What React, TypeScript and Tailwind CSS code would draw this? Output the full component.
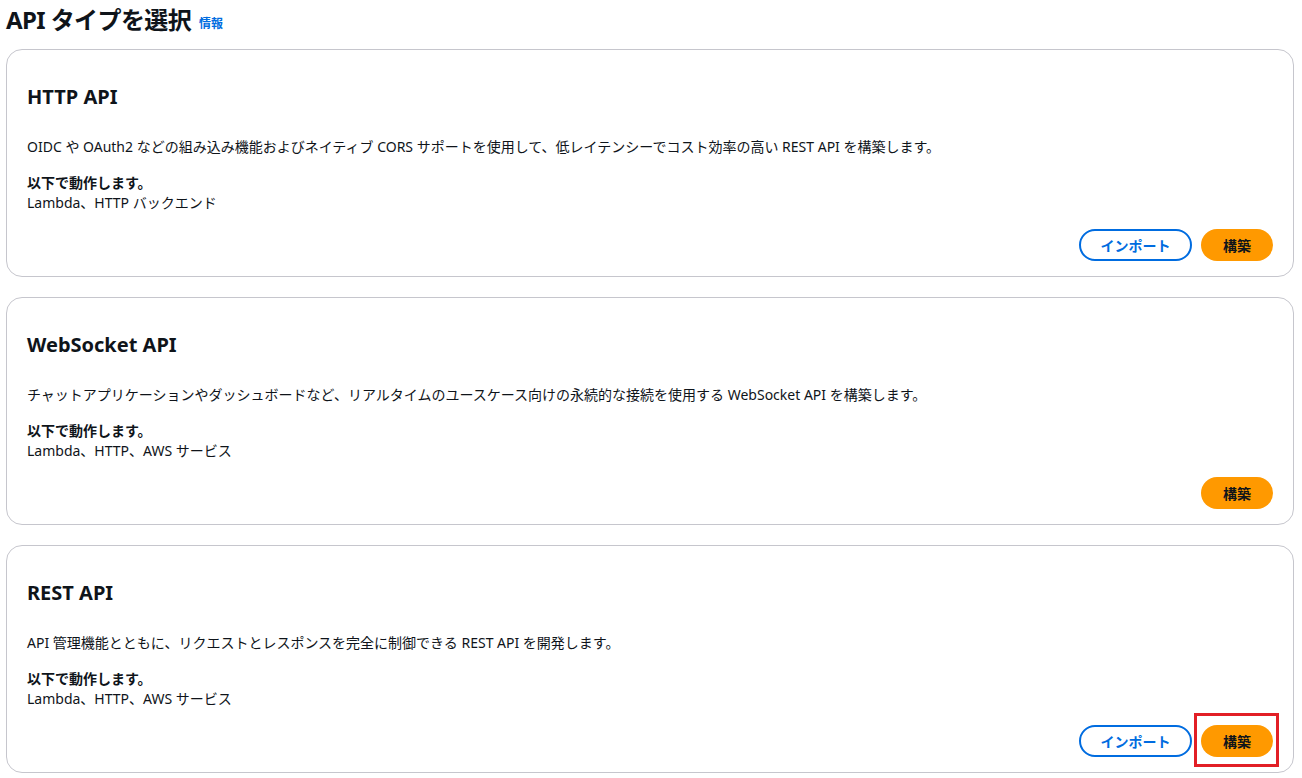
import React from 'react';

type ApiCard = {
  id: string;
  title: string;
  description: string;
  worksWith: string;
  canImport: boolean;
  highlight?: boolean;
};

const cards: ApiCard[] = [
  {
    id: 'http',
    title: 'HTTP API',
    description:
      'OIDC や OAuth2 などの組み込み機能およびネイティブ CORS サポートを使用して、低レイテンシーでコスト効率の高い REST API を構築します。',
    worksWith: 'Lambda、HTTP バックエンド',
    canImport: true,
  },
  {
    id: 'websocket',
    title: 'WebSocket API',
    description:
      'チャットアプリケーションやダッシュボードなど、リアルタイムのユースケース向けの永続的な接続を使用する WebSocket API を構築します。',
    worksWith: 'Lambda、HTTP、AWS サービス',
    canImport: false,
  },
  {
    id: 'rest',
    title: 'REST API',
    description: 'API 管理機能とともに、リクエストとレスポンスを完全に制御できる REST API を開発します。',
    worksWith: 'Lambda、HTTP、AWS サービス',
    canImport: true,
    highlight: true,
  },
];

const Card: React.FC<{ card: ApiCard }> = ({ card }) => {
  return (
    <div className="w-[1288px] h-[228px] rounded-[16px] border border-[#c6c6cd] bg-white px-[20px] pt-[35px] flex flex-col">
      <h2 className="text-[20px] leading-[24px] font-bold text-[#0f141a]">{card.title}</h2>
      <p className="mt-[28px] text-[14px] leading-[20px] text-[#0f141a]">{card.description}</p>
      <div className="mt-[16px] text-[14px] leading-[20px] text-[#0f141a]">
        <div className="font-bold">以下で動作します。</div>
        <div>{card.worksWith}</div>
      </div>

      {/* Actions */}
      <div className="mt-[16px] flex justify-end items-center gap-[9px]">
        {card.canImport && (
          <button className="h-[32px] w-[113px] rounded-full border-2 border-[#006ce0] bg-white text-[14px] font-bold text-[#006ce0]">
            インポート
          </button>
        )}
        <div className="relative">
          <button className="h-[32px] w-[72px] rounded-full bg-[#ff9900] text-[14px] font-bold text-[#0f141a]">
            構築
          </button>
          {card.highlight && (
            <div className="absolute left-[-7px] top-[-12px] w-[85px] h-[54px] border-[3px] border-[#e21f26] pointer-events-none" />
          )}
        </div>
      </div>
    </div>
  );
};

export default function App() {
  return (
    <div
      className="min-h-screen bg-white px-[6px] text-[#0f141a]"
      style={{ fontFamily: '"Noto Sans", "Noto Sans CJK JP", sans-serif' }}
    >
      {/* Header */}
      <div className="h-[39px] flex items-end pb-[4px] gap-[8px]">
        <h1 className="text-[24px] leading-[30px] font-bold tracking-tight">API タイプを選択</h1>
        <a className="text-[12px] leading-[20px] font-bold text-[#006ce0] mb-[1px]">情報</a>
      </div>

      <div className="mt-[10px] flex flex-col gap-[20px]">
        {cards.map((c) => (
          <Card key={c.id} card={c} />
        ))}
      </div>
    </div>
  );
}
